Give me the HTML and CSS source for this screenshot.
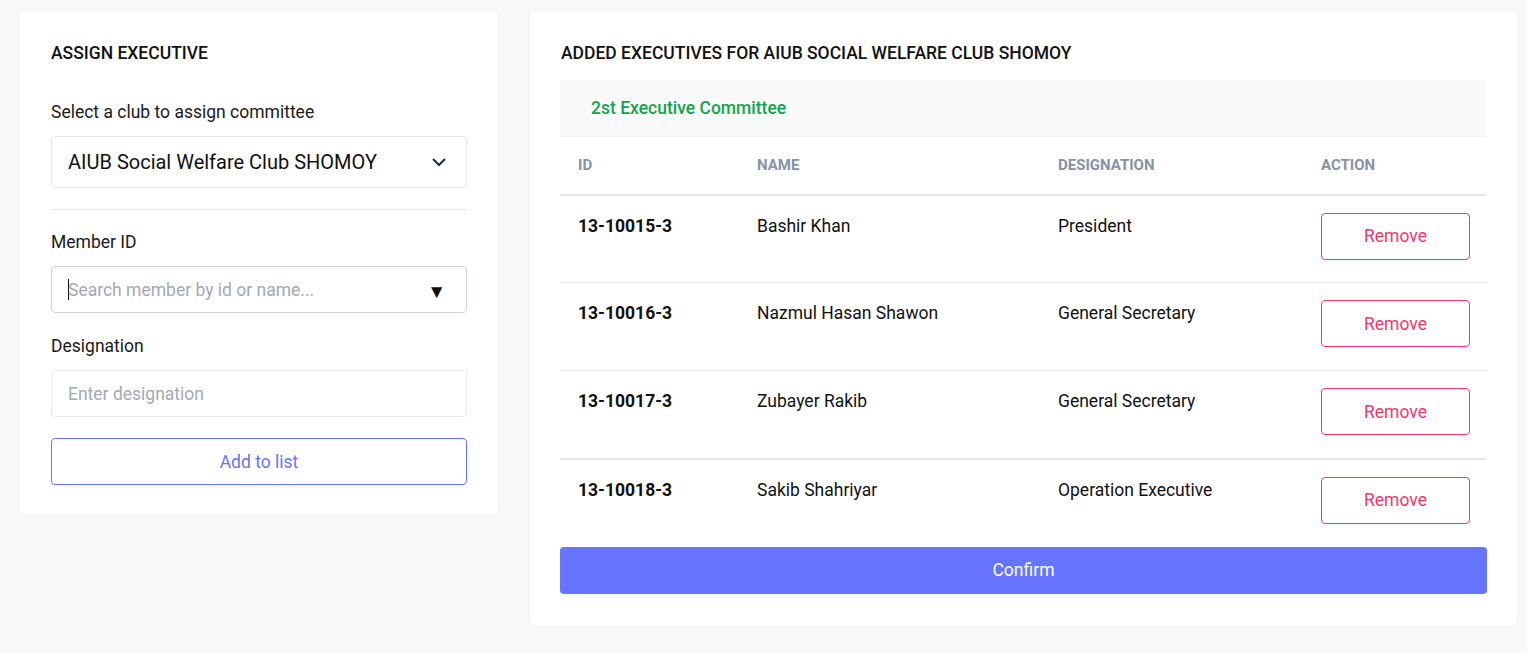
FILE: index.html
```html
<!DOCTYPE html>
<html>
<head>
<meta charset="utf-8">
<link rel="stylesheet" href="styles.css">
</head>
<body>
<div class="page">
  <section class="card left">
    <h2 class="title">ASSIGN EXECUTIVE</h2>
    <label class="label first">Select a club to assign committee</label>
    <div class="select">
      <span>AIUB Social Welfare Club SHOMOY</span>
      <svg width="14" height="9" viewBox="0 0 14 9"><path d="M1.5 1.5 L7 7 L12.5 1.5" fill="none" stroke="#1f2937" stroke-width="2" stroke-linecap="round" stroke-linejoin="round"/></svg>
    </div>
    <hr class="divider">
    <label class="label">Member ID</label>
    <div class="input search">
      <span class="caret"></span><span class="ph">Search member by id or name...</span>
      <span class="tri">▼</span>
    </div>
    <label class="label">Designation</label>
    <div class="input plain"><span class="ph">Enter designation</span></div>
    <button class="btn-outline">Add to list</button>
  </section>

  <section class="card right">
    <h2 class="title">ADDED EXECUTIVES FOR AIUB SOCIAL WELFARE CLUB SHOMOY</h2>
    <div class="committee">2st Executive Committee</div>
    <table class="table">
      <thead>
        <tr><th class="c1">ID</th><th class="c2">NAME</th><th class="c3">DESIGNATION</th><th class="c4">ACTION</th></tr>
      </thead>
      <tbody>
        <tr><td class="id">13-10015-3</td><td>Bashir Khan</td><td>President</td><td><button class="btn-remove">Remove</button></td></tr>
        <tr><td class="id">13-10016-3</td><td>Nazmul Hasan Shawon</td><td>General Secretary</td><td><button class="btn-remove">Remove</button></td></tr>
        <tr><td class="id">13-10017-3</td><td>Zubayer Rakib</td><td>General Secretary</td><td><button class="btn-remove">Remove</button></td></tr>
        <tr class="last"><td class="id">13-10018-3</td><td>Sakib Shahriyar</td><td>Operation Executive</td><td><button class="btn-remove">Remove</button></td></tr>
      </tbody>
    </table>
    <button class="btn-confirm">Confirm</button>
  </section>
</div>
</body>
</html>
```

FILE: styles.css
```css
* { box-sizing: border-box; }
html, body { margin: 0; padding: 0; }
body {
  background: #f7f8fa;
  font-family: Roboto, "Liberation Sans", Arial, sans-serif;
  color: #111;
}
.page {
  display: flex;
  align-items: flex-start;
  gap: 32px;
  padding: 11px 10px 0 20px;
}
.card {
  background: #fff;
  border-radius: 4px;
  box-shadow: 0 0 4px rgba(0,0,0,0.04);
  padding: 31px;
}
.left { width: 478px; flex: none; display: flex; flex-direction: column; padding-bottom: 30px; }
.right { flex: 1; padding: 31px 30px 31px 30px; }
.title {
  margin: 0;
  font-size: 17.5px;
  font-weight: 500;
  line-height: 22px;
  color: #111;
}
.right .title { padding-left: 1px; }
.label {
  display: block;
  font-size: 17.5px;
  line-height: 20px;
  color: #1a1a1a;
  margin-top: 23px;
  margin-bottom: 14px;
}
.label.first { margin-top: 38px; }
.select {
  height: 52px;
  border: 1px solid #e6e8ec;
  border-radius: 4px;
  display: flex;
  align-items: center;
  justify-content: space-between;
  padding: 0 20px 0 16px;
  font-size: 20px;
  color: #111;
}
.divider {
  border: 0;
  border-top: 1px solid #e6e8ec;
  margin: 21px 0 0 0;
}
.divider + .label { margin-top: 22px; }
.input {
  height: 47px;
  border-radius: 4px;
  display: flex;
  align-items: center;
  padding: 0 16px;
  font-size: 17.5px;
}
.input.search { border: 1px solid #cfd3da; }
.input.plain { border: 1px solid #e8eaee; }
.ph { color: #a3a9b4; }
.caret {
  display: inline-block;
  width: 1px;
  height: 21px;
  background: #111;
  margin-right: -1px;
}
.tri {
  margin-left: auto;
  font-size: 19px;
  color: #111;
  margin-right: 4px;
  margin-top: 4px;
}
.btn-outline {
  margin-top: 21px;
  height: 47px;
  border: 1px solid #6674ff;
  border-radius: 4px;
  background: #fff;
  color: #6674ff;
  font-family: inherit;
  font-size: 17.5px;
  cursor: pointer;
}
.committee {
  margin-top: 16px;
  height: 56px;
  background: #fafafa;
  color: #17a24a;
  font-size: 17.5px;
  font-weight: 500;
  display: flex;
  align-items: center;
  padding-left: 31px;
}
.table {
  width: 100%;
  border-collapse: collapse;
  table-layout: fixed;
}
.table th {
  height: 58px;
  text-align: left;
  font-size: 15px;
  font-weight: 700;
  color: #8791a5;
  padding: 0 0 0 18px;
  border-top: 1px solid #f0f1f4;
  border-bottom: 2px solid #e5e7eb;
}
.c1 { width: 179px; }
.c2 { width: 301px; }
.c3 { width: 263px; }
.c4 { width: auto; }
.table td {
  height: 88px;
  vertical-align: top;
  padding: 19px 17px 0 18px;
  font-size: 17.5px;
  line-height: 22px;
  color: #111;
  border-bottom: 1px solid #e5e7eb;
}
.table tr.last td { border-bottom: 0; }
.table tr:nth-child(3) td { border-bottom: 2px solid #e5e7eb; }
.table td.id { font-weight: 700; }
.table td:last-child { padding-top: 17px; }
.btn-remove {
  width: 149px;
  height: 47px;
  border: 1px solid #f0386b;
  border-radius: 4px;
  background: #fff;
  color: #f0386b;
  font-family: inherit;
  font-size: 17.5px;
  cursor: pointer;
}
.btn-confirm {
  display: block;
  width: 100%;
  height: 47px;
  border: 0;
  border-radius: 4px;
  background: #6674ff;
  color: #fff;
  font-family: inherit;
  font-size: 17.5px;
  cursor: pointer;
}
```
